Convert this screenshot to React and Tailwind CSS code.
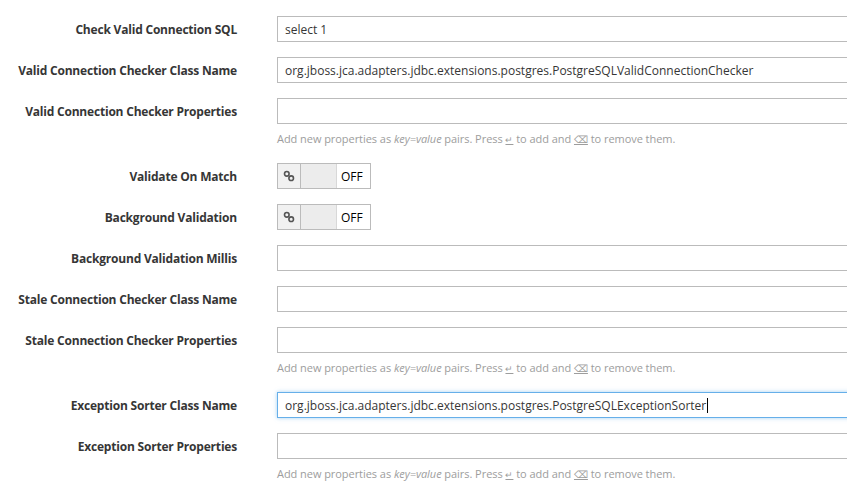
import React from 'react';

const font = { fontFamily: '"Open Sans", "Liberation Sans", sans-serif' };

const LinkIcon = () => (
    <svg width="12" height="12" viewBox="0 0 12 12">
        <circle cx="3.8" cy="3.8" r="2.3" fill="none" stroke="#555" strokeWidth="1.6" />
        <circle cx="8.2" cy="8.2" r="2.3" fill="none" stroke="#555" strokeWidth="1.6" />
    </svg>
);

const Help = () => (
    <div className="mt-[6px] h-[18px] text-[11px] leading-[18px] text-[#9d9d9d] whitespace-nowrap tracking-[-0.05px]">
        Add new properties as <i>key=value</i> pairs. Press <span className="underline text-[9px]">↵</span> to add and <span className="underline text-[10px]">⌫</span> to remove them.
    </div>
);

const Row = ({ label, children }) => (
    <div className="flex items-start mb-[15px]">
        <label className="w-[237px] shrink-0 h-[26px] pt-[2px] leading-[24px] text-right text-[12px] font-bold tracking-[-0.2px] text-[#363636]">
            {label}
        </label>
        <div className="ml-[40px] shrink-0">{children}</div>
    </div>
);

const TextInput = ({ value, focused }) => (
    <div
        className={
            focused
                ? 'w-[620px] h-[26px] border border-[#66afe9] shadow-[0_0_4px_rgba(102,175,233,0.6)] px-[7px] pt-px flex items-center text-[12px] text-[#363636] bg-white'
                : 'w-[620px] h-[26px] border border-[#bbbbbb] px-[7px] pt-px flex items-center text-[12px] text-[#363636] bg-white'
        }
    >
        <span>{value}</span>
        {focused && <span className="w-px h-[15px] bg-black ml-px" />}
    </div>
);

const Toggle = () => (
    <div className="flex h-[26px] w-[94px] border border-[#bbbbbb] text-[12px] text-black">
        <div className="w-[23px] flex items-center justify-center bg-[#f1f1f1] border-r border-[#bbbbbb]">
            <LinkIcon />
        </div>
        <div className="w-[36px] bg-[#ececec] border-r border-[#d8d8d8]" />
        <div className="flex-1 flex items-center pl-[4px] pt-px bg-white">OFF</div>
    </div>
);

export default function App() {
    return (
        <div className="w-[847px] h-[487px] overflow-hidden bg-white pt-[16px]" style={font}>
            <Row label="Check Valid Connection SQL">
                <TextInput value="select 1" />
            </Row>
            <Row label="Valid Connection Checker Class Name">
                <TextInput value="org.jboss.jca.adapters.jdbc.extensions.postgres.PostgreSQLValidConnectionChecker" />
            </Row>
            <Row label="Valid Connection Checker Properties">
                <TextInput value="" />
                <Help />
            </Row>
            <Row label="Validate On Match">
                <Toggle />
            </Row>
            <Row label="Background Validation">
                <Toggle />
            </Row>
            <Row label="Background Validation Millis">
                <TextInput value="" />
            </Row>
            <Row label="Stale Connection Checker Class Name">
                <TextInput value="" />
            </Row>
            <Row label="Stale Connection Checker Properties">
                <TextInput value="" />
                <Help />
            </Row>
            <Row label="Exception Sorter Class Name">
                <TextInput value="org.jboss.jca.adapters.jdbc.extensions.postgres.PostgreSQLExceptionSorter" focused />
            </Row>
            <Row label="Exception Sorter Properties">
                <TextInput value="" />
                <Help />
            </Row>
        </div>
    );
}
